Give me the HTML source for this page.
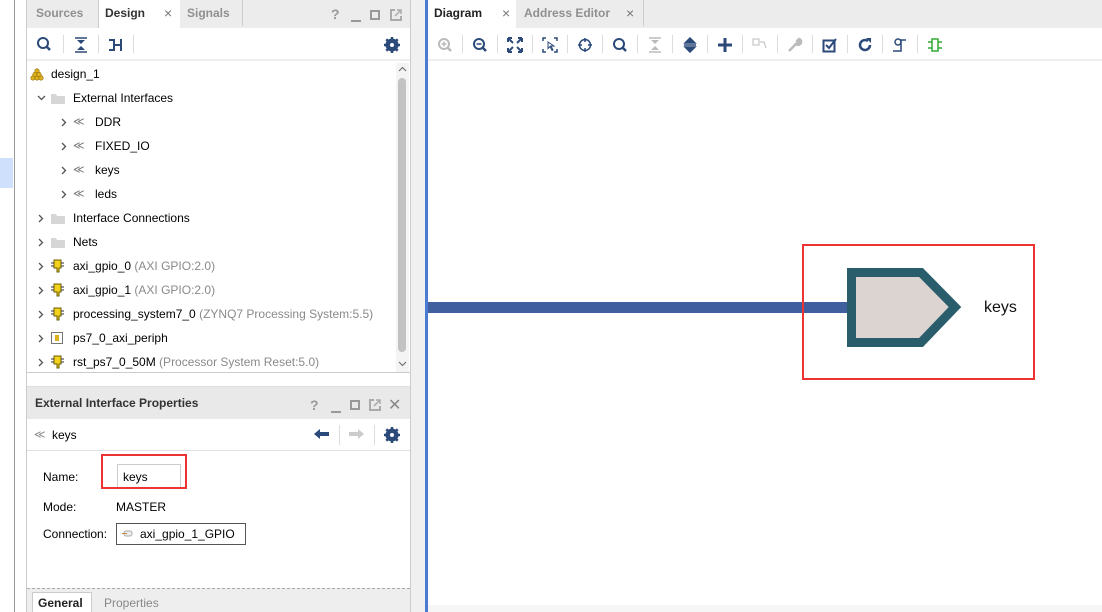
<!DOCTYPE html>
<html><head><meta charset="utf-8"><style>
*{box-sizing:border-box;margin:0;padding:0}
body{width:1102px;height:612px;overflow:hidden;background:#fff;font-family:"Liberation Sans",Arial,sans-serif;font-size:12px;color:#000;position:relative}
.abs{position:absolute}
.t{position:absolute;white-space:nowrap}
.row{position:absolute;height:24px;line-height:24px;white-space:nowrap;font-size:12px}
.gray{color:#8a8a8a}
.ico{position:absolute}
.sep{position:absolute;top:35px;width:1px;height:18px;background:#ddd}
.cv{position:absolute}
</style></head><body>
<div class="abs" style="left:14px;top:0;width:1px;height:612px;background:#999"></div>
<div class="abs" style="left:0;top:158px;width:13px;height:30px;background:#cfe0fd"></div>
<div class="abs" style="left:26px;top:0;width:1px;height:612px;background:#ccc"></div>
<div class="abs" style="left:410px;top:0;width:16px;height:612px;background:#f0f0f0;border-left:1px solid #ccc"></div>
<div class="abs" style="left:425px;top:0;width:3px;height:612px;background:#4a7bd0"></div>

<div class="abs" style="left:27px;top:0;width:383px;height:28px;background:#ececec"></div>
<div class="abs" style="left:98px;top:0;width:82px;height:28px;background:#fff;border-left:1px solid #ccc"></div>
<div class="abs" style="left:242px;top:0;width:1px;height:26px;background:#ccc"></div>
<div class="t" style="left:36px;top:6px;color:#909090;font-weight:bold">Sources</div>
<div class="t" style="left:105px;top:6px;font-weight:bold;color:#333">Design</div>
<div class="t" style="left:164px;top:5px;color:#777;font-size:14px">×</div>
<div class="t" style="left:187px;top:6px;color:#909090;font-weight:bold">Signals</div>
<div class="t" style="left:331px;top:6px;color:#999;font-weight:bold;font-size:14px">?</div>
<div class="abs" style="left:351px;top:20px;width:10px;height:2px;background:#999"></div>
<div class="abs" style="left:370px;top:10px;width:10px;height:10px;border:2px solid #999"></div>
<svg class="abs" style="left:390px;top:9px" width="12" height="12"><path d="M5 1H1v10h10V7" stroke="#aaa" stroke-width="2" fill="none"/><path d="M5 7l6-6M7 1h4v4" stroke="#aaa" stroke-width="1.5" fill="none"/></svg>

<div class="abs" style="left:27px;top:28px;width:383px;height:33px;background:#fff;border-bottom:2px solid #eee"></div>
<svg class="abs" style="left:36px;top:36px" width="16" height="16"><circle cx="7" cy="7" r="5" fill="none" stroke="#2b4a7a" stroke-width="2"/><line x1="10.5" y1="10.5" x2="14" y2="14" stroke="#2b4a7a" stroke-width="2.5"/></svg>
<div class="sep" style="left:63px"></div>
<svg class="abs" style="left:73px;top:37px" width="16" height="16"><path d="M2 1h12M2 15h12" stroke="#2b4a7a" stroke-width="1.5"/><path d="M4 3h8l-4 4zM4 13h8l-4-4z" fill="#2b4a7a"/></svg>
<div class="sep" style="left:98px"></div>
<svg class="abs" style="left:108px;top:37px" width="16" height="16"><path d="M1 2h6v5h5V2h2v12h-2V9H7v5H1v-2h4V4H1z" fill="#2b4a7a"/></svg>
<div class="sep" style="left:133px"></div>
<svg class="abs" style="left:384px;top:37px" width="16" height="16"><circle cx="8" cy="8" r="5" fill="none" stroke="#2b4a7a" stroke-width="3"/><path d="M8 0v16M0 8h16M2.3 2.3l11.4 11.4M13.7 2.3L2.3 13.7" stroke="#2b4a7a" stroke-width="2.5"/><circle cx="8" cy="8" r="2" fill="#fff"/></svg>

<div class="abs" style="left:27px;top:62px;width:383px;height:311px;border-bottom:1px solid #ccc"></div>
<div class="abs" style="left:396px;top:63px;width:13px;height:309px;background:#f4f4f4"></div>
<div class="abs" style="left:398px;top:78px;width:8px;height:274px;background:#c2c2c2;border-radius:4px"></div>
<svg class="abs" style="left:398px;top:66px" width="9" height="6"><path d="M1 5l3.5-3.5L8 5" stroke="#666" fill="none"/></svg>
<svg class="abs" style="left:398px;top:361px" width="9" height="6"><path d="M1 1l3.5 3.5L8 1" stroke="#666" fill="none"/></svg>

<svg class="ico" style="left:30px;top:68px" width="14" height="13"><g fill="#e0b020" stroke="#8a6a00" stroke-width=".6"><circle cx="7" cy="3" r="2.2"/><circle cx="3" cy="10" r="2.2"/><circle cx="7" cy="10" r="2.2"/><circle cx="11" cy="10" r="2.2"/><circle cx="5" cy="6.5" r="2.2"/><circle cx="9" cy="6.5" r="2.2"/></g></svg>
<div class="row" style="left:51px;top:62px">design_1</div>
<svg class="cv" style="left:37px;top:95px" width="9" height="6"><path d="M1 1l3.5 3.5L8 1" stroke="#555" stroke-width="1.3" fill="none"/></svg>
<svg class="ico" style="left:51px;top:93px" width="14" height="11"><path d="M0 1h5l1 2h8v8H0z" fill="#d6d6d6"/></svg>
<div class="row" style="left:73px;top:86px">External Interfaces</div>

<svg class="cv" style="left:61px;top:118px" width="6" height="9"><path d="M1 1l3.5 3.5L1 8" stroke="#555" stroke-width="1.3" fill="none"/></svg><div class="t" style="left:73px;top:115px;color:#777;font-size:11px">≪</div><div class="row" style="left:95px;top:110px">DDR</div>
<svg class="cv" style="left:61px;top:142px" width="6" height="9"><path d="M1 1l3.5 3.5L1 8" stroke="#555" stroke-width="1.3" fill="none"/></svg><div class="t" style="left:73px;top:139px;color:#777;font-size:11px">≪</div><div class="row" style="left:95px;top:134px">FIXED_IO</div>
<svg class="cv" style="left:61px;top:166px" width="6" height="9"><path d="M1 1l3.5 3.5L1 8" stroke="#555" stroke-width="1.3" fill="none"/></svg><div class="t" style="left:73px;top:163px;color:#777;font-size:11px">≪</div><div class="row" style="left:95px;top:158px">keys</div>
<svg class="cv" style="left:61px;top:190px" width="6" height="9"><path d="M1 1l3.5 3.5L1 8" stroke="#555" stroke-width="1.3" fill="none"/></svg><div class="t" style="left:73px;top:187px;color:#777;font-size:11px">≪</div><div class="row" style="left:95px;top:182px">leds</div>

<svg class="cv" style="left:38px;top:214px" width="6" height="9"><path d="M1 1l3.5 3.5L1 8" stroke="#555" stroke-width="1.3" fill="none"/></svg><svg class="ico" style="left:51px;top:213px" width="14" height="11"><path d="M0 1h5l1 2h8v8H0z" fill="#d6d6d6"/></svg><div class="row" style="left:73px;top:206px">Interface Connections</div>
<svg class="cv" style="left:38px;top:238px" width="6" height="9"><path d="M1 1l3.5 3.5L1 8" stroke="#555" stroke-width="1.3" fill="none"/></svg><svg class="ico" style="left:51px;top:237px" width="14" height="11"><path d="M0 1h5l1 2h8v8H0z" fill="#d6d6d6"/></svg><div class="row" style="left:73px;top:230px">Nets</div>

<svg class="cv" style="left:38px;top:262px" width="6" height="9"><path d="M1 1l3.5 3.5L1 8" stroke="#555" stroke-width="1.3" fill="none"/></svg><svg class="ico" style="left:51px;top:259px" width="13" height="14"><path d="M3 1h7v8H8v4H6V9H3z" fill="#f2d21a" stroke="#6b5a00"/><path d="M0 4h3M0 7h3M10 4h3M10 7h3" stroke="#333"/></svg><div class="row" style="left:73px;top:254px">axi_gpio_0 <span class="gray">(AXI GPIO:2.0)</span></div>
<svg class="cv" style="left:38px;top:286px" width="6" height="9"><path d="M1 1l3.5 3.5L1 8" stroke="#555" stroke-width="1.3" fill="none"/></svg><svg class="ico" style="left:51px;top:283px" width="13" height="14"><path d="M3 1h7v8H8v4H6V9H3z" fill="#f2d21a" stroke="#6b5a00"/><path d="M0 4h3M0 7h3M10 4h3M10 7h3" stroke="#333"/></svg><div class="row" style="left:73px;top:278px">axi_gpio_1 <span class="gray">(AXI GPIO:2.0)</span></div>
<svg class="cv" style="left:38px;top:310px" width="6" height="9"><path d="M1 1l3.5 3.5L1 8" stroke="#555" stroke-width="1.3" fill="none"/></svg><svg class="ico" style="left:51px;top:307px" width="13" height="14"><path d="M3 1h7v8H8v4H6V9H3z" fill="#f2d21a" stroke="#6b5a00"/><path d="M0 4h3M0 7h3M10 4h3M10 7h3" stroke="#333"/></svg><div class="row" style="left:73px;top:302px">processing_system7_0 <span class="gray">(ZYNQ7 Processing System:5.5)</span></div>
<svg class="cv" style="left:38px;top:334px" width="6" height="9"><path d="M1 1l3.5 3.5L1 8" stroke="#555" stroke-width="1.3" fill="none"/></svg><svg class="ico" style="left:51px;top:332px" width="13" height="13"><rect x=".5" y=".5" width="11" height="11" fill="#fff" stroke="#777"/><rect x="4" y="3" width="4" height="6" fill="#e0b020"/></svg><div class="row" style="left:73px;top:326px">ps7_0_axi_periph</div>
<svg class="cv" style="left:38px;top:358px" width="6" height="9"><path d="M1 1l3.5 3.5L1 8" stroke="#555" stroke-width="1.3" fill="none"/></svg><svg class="ico" style="left:51px;top:355px" width="13" height="14"><path d="M3 1h7v8H8v4H6V9H3z" fill="#f2d21a" stroke="#6b5a00"/><path d="M0 4h3M0 7h3M10 4h3M10 7h3" stroke="#333"/></svg><div class="row" style="left:73px;top:350px">rst_ps7_0_50M <span class="gray">(Processor System Reset:5.0)</span></div>

<div class="abs" style="left:27px;top:374px;width:383px;height:12px;background:#fff"></div>
<div class="abs" style="left:27px;top:386px;width:383px;height:226px;border-top:1px solid #ddd;background:#fff"></div>
<div class="abs" style="left:27px;top:387px;width:383px;height:32px;background:#e9e9e9"></div>
<div class="t" style="left:35px;top:396px;font-weight:bold;color:#333">External Interface Properties</div>
<div class="t" style="left:310px;top:397px;color:#999;font-weight:bold;font-size:14px">?</div>
<div class="abs" style="left:331px;top:411px;width:10px;height:2px;background:#999"></div>
<div class="abs" style="left:350px;top:400px;width:10px;height:10px;border:2px solid #999"></div>
<svg class="abs" style="left:369px;top:399px" width="12" height="12"><path d="M5 1H1v10h10V7" stroke="#aaa" stroke-width="2" fill="none"/><path d="M5 7l6-6M7 1h4v4" stroke="#aaa" stroke-width="1.5" fill="none"/></svg>
<div class="t" style="left:388px;top:395px;color:#888;font-size:16px">✕</div>
<div class="abs" style="left:27px;top:450px;width:383px;height:1px;background:#e0e0e0"></div>
<div class="t" style="left:34px;top:428px;color:#888;font-size:11px">≪</div>
<div class="t" style="left:52px;top:428px">keys</div>
<svg class="abs" style="left:314px;top:428px" width="16" height="12"><path d="M0 6l6-5v3h9v4H6v3z" fill="#2b4a7a"/></svg>
<div class="abs" style="left:339px;top:425px;width:1px;height:20px;background:#ddd"></div>
<svg class="abs" style="left:348px;top:428px" width="16" height="12"><path d="M16 6l-6-5v3H1v4h9v3z" fill="#ccc"/></svg>
<div class="abs" style="left:374px;top:425px;width:1px;height:20px;background:#ddd"></div>
<svg class="abs" style="left:384px;top:427px" width="16" height="16"><circle cx="8" cy="8" r="5" fill="none" stroke="#2b4a7a" stroke-width="3"/><path d="M8 0v16M0 8h16M2.3 2.3l11.4 11.4M13.7 2.3L2.3 13.7" stroke="#2b4a7a" stroke-width="2.5"/><circle cx="8" cy="8" r="2" fill="#fff"/></svg>

<div class="t" style="left:43px;top:470px">Name:</div>
<div class="abs" style="left:117px;top:464px;width:64px;height:24px;border:1px solid #ccc"></div>
<div class="t" style="left:123px;top:470px">keys</div>
<div class="abs" style="left:101px;top:454px;width:86px;height:35px;border:2px solid #ee3333"></div>
<div class="t" style="left:43px;top:500px">Mode:</div>
<div class="t" style="left:116px;top:500px">MASTER</div>
<div class="t" style="left:43px;top:527px">Connection:</div>
<div class="abs" style="left:116px;top:523px;width:130px;height:22px;border:1px solid #555"></div>
<svg class="abs" style="left:122px;top:530px" width="12" height="7"><rect x="2" y="1" width="8" height="5" rx="2" fill="#eee" stroke="#aaa"/><path d="M0 3.5h5" stroke="#c84"/></svg>
<div class="t" style="left:140px;top:527px">axi_gpio_1_GPIO</div>

<div class="abs" style="left:27px;top:588px;width:383px;height:24px;background:#eee;border-top:1px dashed #aaa"></div>
<div class="abs" style="left:32px;top:592px;width:60px;height:20px;background:#fff;border:1px solid #ccc;border-bottom:none"></div>
<div class="t" style="left:38px;top:596px;font-weight:bold;color:#222">General</div>
<div class="t" style="left:104px;top:596px;color:#888">Properties</div>

<div class="abs" style="left:428px;top:0;width:674px;height:28px;background:#ececec"></div>
<div class="abs" style="left:428px;top:0;width:88px;height:28px;background:#fff"></div>
<div class="abs" style="left:643px;top:0;width:1px;height:26px;background:#ccc"></div>
<div class="t" style="left:434px;top:6px;font-weight:bold;color:#222">Diagram</div>
<div class="t" style="left:502px;top:5px;color:#777;font-size:14px">×</div>
<div class="t" style="left:524px;top:6px;color:#909090;font-weight:bold">Address Editor</div>
<div class="t" style="left:626px;top:5px;color:#777;font-size:14px">×</div>
<div class="abs" style="left:428px;top:28px;width:674px;height:33px;background:#fff;border-bottom:2px solid #eee"></div>
<svg class="abs" style="left:437px;top:37px" width="16" height="16"><circle cx="7" cy="7" r="5" fill="none" stroke="#bbb" stroke-width="2"/><path d="M4.5 7h5M7 4.5v5" stroke="#bbb" stroke-width="1.5"/><line x1="10.5" y1="10.5" x2="14" y2="14" stroke="#bbb" stroke-width="2.5"/></svg>
<div class="sep" style="left:462px"></div>
<svg class="abs" style="left:472px;top:37px" width="16" height="16"><circle cx="7" cy="7" r="5" fill="none" stroke="#2b4a7a" stroke-width="2"/><path d="M4.5 7h5" stroke="#2b4a7a" stroke-width="1.5"/><line x1="10.5" y1="10.5" x2="14" y2="14" stroke="#2b4a7a" stroke-width="2.5"/></svg>
<div class="sep" style="left:497px"></div>
<svg class="abs" style="left:507px;top:37px" width="16" height="16"><path d="M1 1l5 5M15 1l-5 5M1 15l5-5M15 15l-5-5M1 1h4M1 1v4M15 1h-4M15 1v4M1 15h4M1 15v-4M15 15h-4M15 15v-4" stroke="#2b4a7a" stroke-width="2"/></svg>
<div class="sep" style="left:532px"></div>
<svg class="abs" style="left:542px;top:37px" width="16" height="16"><path d="M1 4V1h3M12 1h3v3M15 12v3h-3M4 15H1v-3" stroke="#2b4a7a" stroke-width="1.5" fill="none"/><path d="M6 5l6 4-3 0 2 4-1 .5-2-4-2 2z" fill="#fff" stroke="#2b4a7a"/></svg>
<div class="sep" style="left:567px"></div>
<svg class="abs" style="left:577px;top:37px" width="16" height="16"><circle cx="8" cy="8" r="5.5" fill="none" stroke="#2b4a7a" stroke-width="1.5"/><path d="M8 1v4M8 11v4M1 8h4M11 8h4" stroke="#2b4a7a" stroke-width="1.5"/></svg>
<div class="sep" style="left:602px"></div>
<svg class="abs" style="left:612px;top:37px" width="16" height="16"><circle cx="7" cy="7" r="5" fill="none" stroke="#2b4a7a" stroke-width="2"/><line x1="10.5" y1="10.5" x2="14" y2="14" stroke="#2b4a7a" stroke-width="2.5"/></svg>
<div class="sep" style="left:637px"></div>
<svg class="abs" style="left:647px;top:37px" width="16" height="16"><path d="M2 1h12M2 15h12" stroke="#bbb" stroke-width="1.5"/><path d="M4 3h8l-4 4zM4 13h8l-4-4z" fill="#bbb"/></svg>
<div class="sep" style="left:672px"></div>
<svg class="abs" style="left:682px;top:37px" width="16" height="16"><path d="M3 6l5-5 5 5zM3 10l5 5 5-5z M2 8h12" fill="#2b4a7a" stroke="#2b4a7a" stroke-width="1.5"/></svg>
<div class="sep" style="left:707px"></div>
<svg class="abs" style="left:717px;top:37px" width="16" height="16"><path d="M8 1v14M1 8h14" stroke="#2b4a7a" stroke-width="3"/></svg>
<div class="sep" style="left:742px"></div>
<svg class="abs" style="left:752px;top:37px" width="16" height="16"><rect x="1" y="2" width="6" height="6" fill="none" stroke="#bbb"/><path d="M8 5h4l2 6" stroke="#bbb" fill="none"/></svg>
<div class="sep" style="left:777px"></div>
<svg class="abs" style="left:787px;top:37px" width="16" height="16"><path d="M2 14l7-7M9 7a3 3 0 1 0 3-5l-2 2 1 2-2 1z" stroke="#bbb" stroke-width="2.5" fill="#bbb"/></svg>
<div class="sep" style="left:812px"></div>
<svg class="abs" style="left:822px;top:37px" width="16" height="16"><rect x="1.5" y="3.5" width="11" height="11" fill="none" stroke="#2b4a7a" stroke-width="2"/><path d="M4 8l3 3 7-9" stroke="#2b4a7a" stroke-width="2" fill="none"/></svg>
<div class="sep" style="left:847px"></div>
<svg class="abs" style="left:857px;top:37px" width="16" height="16"><path d="M13 8a5 5 0 1 1-2-4" stroke="#2b4a7a" stroke-width="2.5" fill="none"/><path d="M9 1h5v5z" fill="#2b4a7a"/></svg>
<div class="sep" style="left:882px"></div>
<svg class="abs" style="left:892px;top:37px" width="16" height="16"><circle cx="6" cy="5" r="3" fill="none" stroke="#2b4a7a" stroke-width="1.5"/><path d="M1 14h8V3h5" stroke="#2b4a7a" stroke-width="1.5" fill="none"/></svg>
<div class="sep" style="left:917px"></div>
<svg class="abs" style="left:927px;top:37px" width="16" height="16"><rect x="5" y="2" width="6" height="12" fill="none" stroke="#3a3" stroke-width="1.5"/><path d="M1 5h4M1 11h4M11 5h4M11 11h4" stroke="#3a3" stroke-width="1.5"/></svg>

<div class="abs" style="left:428px;top:302px;width:424px;height:11px;background:#3f5f9f"></div>
<svg class="abs" style="left:845px;top:266px" width="122" height="86"><path d="M6.5 6.5H76L110 41 76 76.5H6.5z" fill="#dcd4d0" stroke="#2a5d6c" stroke-width="9"/></svg>
<div class="t" style="left:984px;top:299px;font-size:16px;color:#111">keys</div>
<div class="abs" style="left:802px;top:244px;width:233px;height:136px;border:2px solid #ee3333"></div>
<div class="abs" style="left:428px;top:605px;width:674px;height:7px;background:#f6f6f6"></div>
</body></html>
